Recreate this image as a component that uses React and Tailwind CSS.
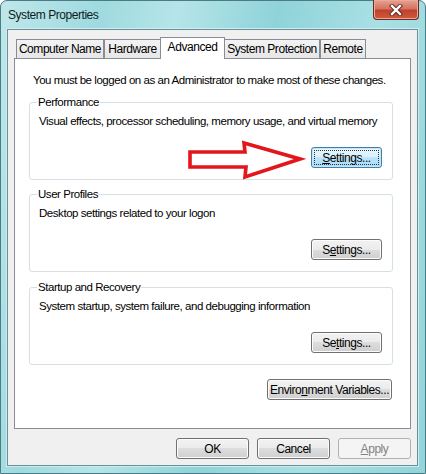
import React from "react";

/* Windows 7 "System Properties" dialog, Advanced tab. */

const font = "font-['Segoe_UI','Liberation_Sans',Arial,sans-serif] tracking-[-0.45px]";

function Btn({ children, w = "w-[73px]", focused = false, disabled = false }) {
  if (focused) {
    return (
      <div className={`${w} h-[21px] rounded-[3px] border border-[#3c7fb1] bg-[linear-gradient(#eaf6fd_0%,#d9f0fc_50%,#bee6fd_50%,#a7d9f5_100%)] p-[2px] shadow-[inset_0_0_0_1px_#c6e6f8]`}>
        <div className="w-full h-full border border-dotted border-[#333] flex items-center justify-center text-[12px] text-black leading-none whitespace-nowrap">
          {children}
        </div>
      </div>
    );
  }
  return (
    <div
      className={`${w} h-[21px] rounded-[3px] border flex items-center justify-center text-[12px] leading-none whitespace-nowrap ${
        disabled
          ? "border-[#adb2b5] bg-[#f4f4f4] text-[#838383]"
          : "border-[#707070] bg-[linear-gradient(#f2f2f2_0%,#ebebeb_50%,#dddddd_50%,#cfcfcf_100%)] shadow-[inset_0_0_0_1px_#fcfcfc] text-black"
      }`}
    >
      {children}
    </div>
  );
}

function Group({ label, desc, children, className = "" }) {
  return (
    <div className={`relative h-[78px] rounded-[3px] border border-[#d5dfe5] ${className}`}>
      <span className="absolute left-[7px] top-[-8px] px-[1px] bg-white leading-[15px] whitespace-nowrap">{label}</span>
      <div className="pl-[9px] pt-[11px] leading-[15px] whitespace-nowrap">{desc}</div>
      <div className="flex justify-end pr-[10px] mt-[18px]">{children}</div>
    </div>
  );
}

function Tab({ children, w, active = false, className = "" }) {
  if (active) {
    return (
      <div className={`${w} h-[22px] -mb-[1px] relative z-10 border border-b-0 border-[#898c95] bg-white flex items-start justify-center pt-[2px] leading-[15px] whitespace-nowrap ${className}`}>
        {children}
      </div>
    );
  }
  return (
    <div className={`${w} h-[19px] border border-b-0 border-[#898c95] bg-[linear-gradient(#f3f3f3,#e6e6e6)] flex items-start justify-center pt-[2px] leading-[15px] whitespace-nowrap ${className}`}>
      {children}
    </div>
  );
}

export default function App() {
  return (
    <div className={`relative w-[426px] h-[474px] flex flex-col rounded-t-[7px] border border-[#4b7b85] bg-[linear-gradient(100deg,#bfe7ea_0%,#9fdadf_20%,#b5e5e8_35%,#8fd3d9_55%,#a9e0e4_75%,#92d4da_100%)] text-black ${font} text-[11.5px]`}>
      {/* title bar */}
      <div className="h-[28px] flex items-start justify-between shrink-0">
        <div className="pl-[7px] pt-[7px] text-[12px] leading-[15px] text-[#0c1d22]">System Properties</div>
        <div className="mr-[6px] -mt-[1px] w-[46px] h-[20px] rounded-b-[4px] border border-[#6e2a1f] border-t-0 bg-[linear-gradient(#e6a293_0%,#d47461_45%,#c1412a_55%,#cf5b3f_100%)] shadow-[inset_0_0_0_1px_#eba999] flex items-center justify-center">
          <svg width="14" height="12" viewBox="0 0 14 12">
            <path d="M3 2 L11 10 M11 2 L3 10" stroke="#5a241c" strokeWidth="4.2" strokeLinecap="square" />
            <path d="M3 2 L11 10 M11 2 L3 10" stroke="#ffffff" strokeWidth="2.4" strokeLinecap="square" />
          </svg>
        </div>
      </div>

      {/* client */}
      <div className="flex-1 ml-[6px] mr-[7px] mb-[7px] border border-[#6e8f9a] bg-[#f0f0f0] flex flex-col px-[6px] pt-[7px] pb-[6px] shadow-[0_0_0_1px_#c9eef0]">
        <div className="flex items-end pl-[2px] h-[21px] text-[12px]">
          <Tab w="w-[88px]">Computer Name</Tab>
          <Tab w="w-[57px]">Hardware</Tab>
          <Tab w="w-[65px]" active className="-ml-[1px]">Advanced</Tab>
          <Tab w="w-[96px]" className="-ml-[1px]">System Protection</Tab>
          <Tab w="w-[46px]">Remote</Tab>
        </div>

        <div className="h-[371px] border border-[#898c95] bg-white">
          <div className="pl-[18px] pt-[14px] leading-[15px] whitespace-nowrap">You must be logged on as an Administrator to make most of these changes.</div>
          <div className="ml-[14px] w-[364px]">
            <Group className="mt-[14px]" label="Performance" desc="Visual effects, processor scheduling, memory usage, and virtual memory">
              <Btn w="w-[71px]" focused><span><u>S</u>ettings...</span></Btn>
            </Group>
            <Group className="mt-[14px]" label="User Profiles" desc="Desktop settings related to your logon">
              <Btn w="w-[71px]"><span>S<u>e</u>ttings...</span></Btn>
            </Group>
            <Group className="mt-[15px]" label="Startup and Recovery" desc="System startup, system failure, and debugging information">
              <Btn w="w-[71px]"><span>Se<u>t</u>tings...</span></Btn>
            </Group>
            <div className="flex justify-end pr-[1px] mt-[14px]">
              <Btn w="w-[125px]"><span>Enviro<u>n</u>ment Variables...</span></Btn>
            </div>
          </div>
        </div>

        <div className="flex justify-end gap-[8px] mt-[9px]">
          <Btn>OK</Btn>
          <Btn>Cancel</Btn>
          <Btn disabled><span><u>A</u>pply</span></Btn>
        </div>
      </div>

      {/* red annotation arrow */}
      <svg className="absolute left-[185px] top-[138px]" width="120" height="42" viewBox="0 0 120 42">
        <polygon points="4,13 59,13 58,4 114,20 59,38 60,28 4,28" fill="none" stroke="#e3161c" strokeWidth="3.6" strokeLinejoin="miter" />
      </svg>
    </div>
  );
}
